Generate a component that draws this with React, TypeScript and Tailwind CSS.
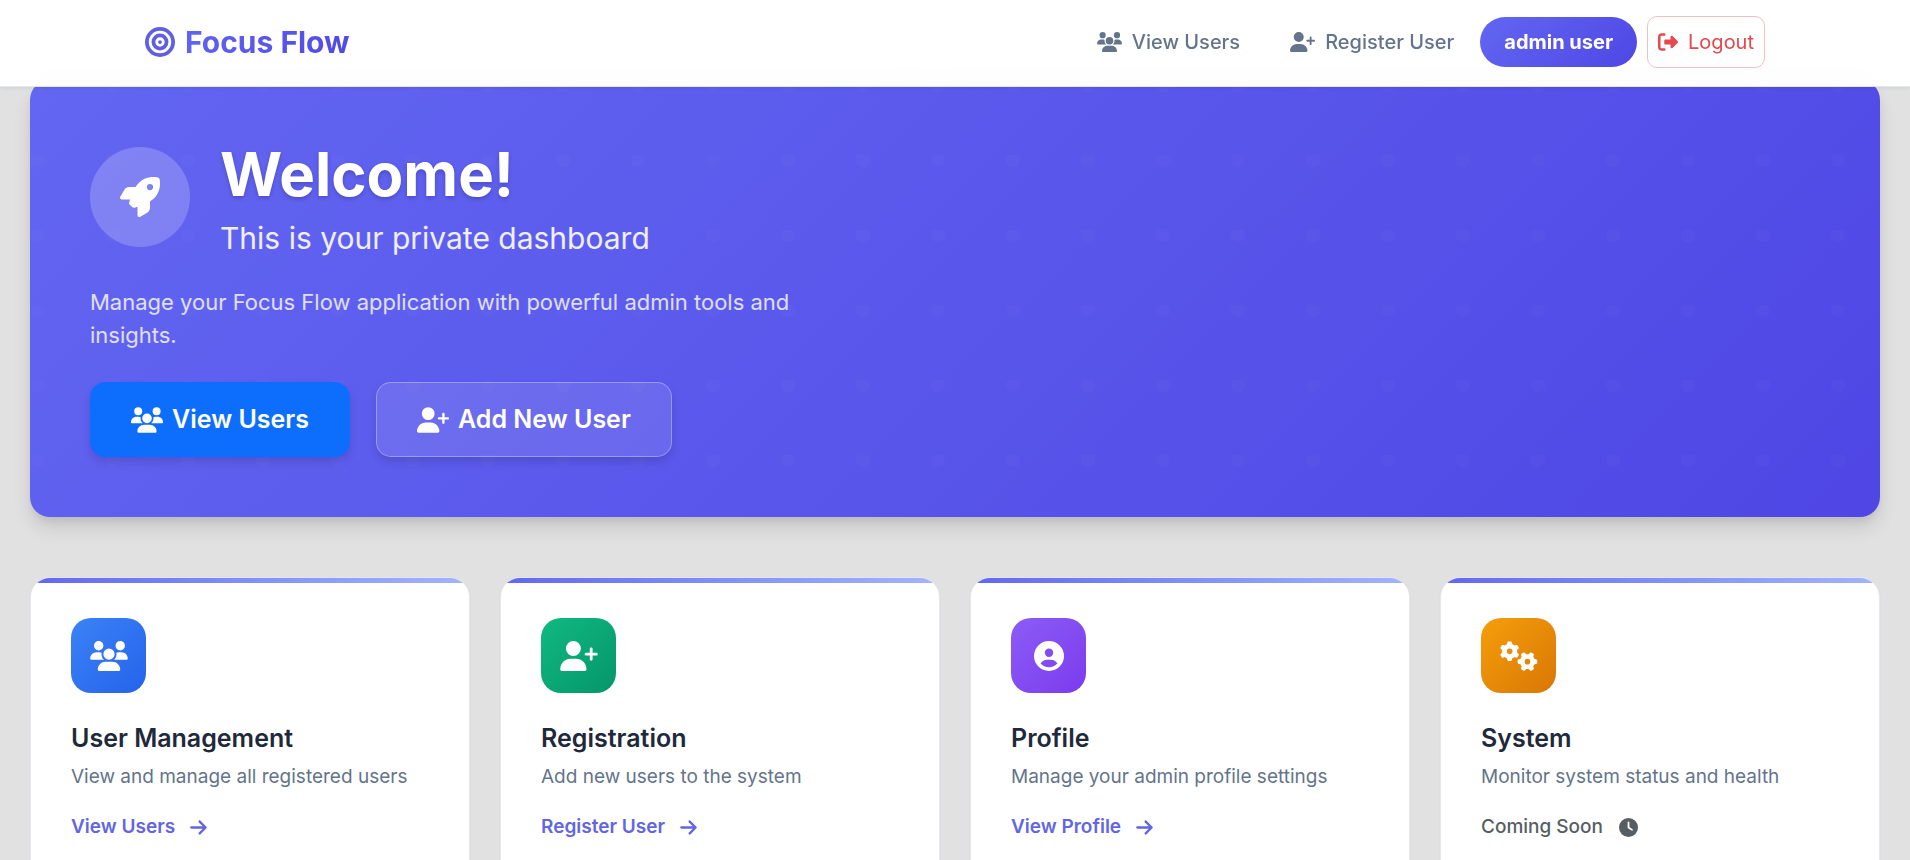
import type { ReactNode } from "react";
import {
  FaArrowRight,
  FaBullseye,
  FaCircleUser,
  FaClock,
  FaGears,
  FaRightFromBracket,
  FaRocket,
  FaUserPlus,
  FaUsers,
} from "react-icons/fa6";

type Feature = {
  title: string;
  text: string;
  action: string;
  tile: string;
  icon: ReactNode;
  available: boolean;
};

const features: Feature[] = [
  {
    title: "User Management",
    text: "View and manage all registered users",
    action: "View Users",
    tile: "from-[#3b82f6] to-[#2563eb]",
    icon: <FaUsers className="h-[30px] w-[38px]" />,
    available: true,
  },
  {
    title: "Registration",
    text: "Add new users to the system",
    action: "Register User",
    tile: "from-[#10b981] to-[#059669]",
    icon: <FaUserPlus className="h-[30px] w-[38px]" />,
    available: true,
  },
  {
    title: "Profile",
    text: "Manage your admin profile settings",
    action: "View Profile",
    tile: "from-[#8b5cf6] to-[#7c3aed]",
    icon: <FaCircleUser className="size-[30px]" />,
    available: true,
  },
  {
    title: "System",
    text: "Monitor system status and health",
    action: "Coming Soon",
    tile: "from-[#f59e0b] to-[#d97706]",
    icon: <FaGears className="h-[30px] w-[38px]" />,
    available: false,
  },
];

function Navbar() {
  return (
    <header className="sticky top-0 z-10 border-b border-[#e2e8f0] bg-white/98 shadow-[0_1px_4px_rgba(0,0,0,0.08)] backdrop-blur-[12px]">
      <nav className="mx-auto flex h-[86px] max-w-[1650px] items-center justify-between px-[15px] pb-[2px]">
        <a href="#home" className="flex items-center gap-[10px] text-[30px] leading-[44px] font-bold">
          <FaBullseye className="size-[30px] text-[#5f5fe0]" />
          <span className="bg-linear-135 from-[#6366f1] to-[#4f46e5] bg-clip-text text-transparent">Focus Flow</span>
        </a>
        <div className="flex items-center gap-[6px] text-[20px] font-medium text-[#64748b]">
          <div className="flex items-center gap-[10px]">
            <a href="#users" className="flex items-center gap-[10px] px-5">
              <FaUsers className="h-5 w-[25px]" />
              View Users
            </a>
            <a href="#register" className="flex items-center gap-[10px] px-5">
              <FaUserPlus className="h-5 w-[25px]" />
              Register User
            </a>
          </div>
          <div className="flex items-center gap-[10px]">
            <span className="rounded-full bg-linear-135 from-[#6366f1] to-[#4f46e5] px-6 py-[10px] font-bold text-white">
              admin user
            </span>
            <button
              type="button"
              className="flex h-[52px] items-center gap-[10px] rounded-[10px] border border-[#f0c0c0] bg-white px-[10px] font-normal text-[#e5484d]"
            >
              <FaRightFromBracket className="size-5" />
              Logout
            </button>
          </div>
        </div>
      </nav>
    </header>
  );
}

function Dots() {
  return (
    <svg className="pointer-events-none absolute inset-0 size-full" aria-hidden="true">
      <defs>
        <pattern id="dots" width="75" height="75" patternUnits="userSpaceOnUse">
          <circle cx="8" cy="5" r="7" fill="#fff" fillOpacity="0.015" />
        </pattern>
      </defs>
      <rect width="100%" height="100%" fill="url(#dots)" />
    </svg>
  );
}

function Hero() {
  return (
    <section className="relative overflow-hidden rounded-[20px] bg-linear-135 from-[#6366f1] to-[#4f46e5] p-[60px] text-white shadow-[0_12px_20px_-2px_rgba(0,0,0,0.12),0_5px_8px_-2px_rgba(0,0,0,0.08)]">
      <Dots />
      <div className="relative">
        <div className="flex items-center gap-[30px]">
          <div className="flex size-[100px] shrink-0 items-center justify-center rounded-full bg-white/20">
            <FaRocket className="size-10" />
          </div>
          <div>
            <h1 className="text-[60px] leading-[68px] font-bold [text-shadow:0_2px_4px_rgba(0,0,0,0.2)]">Welcome!</h1>
            <p className="mt-[14px] text-[30px] leading-8 text-white/90">This is your private dashboard</p>
          </div>
        </div>
        <p className="mt-8 max-w-[750px] text-[22px] leading-[33px] text-white/80">
          Manage your Focus Flow application with powerful admin tools and insights.
        </p>
        <div className="mt-[30px] flex gap-[26px] text-[25px] font-semibold">
          <a
            href="#users"
            className="flex h-[75px] items-center gap-[9px] rounded-[15px] border border-[#0d6efd] bg-[#0d6efd] px-10 shadow-[0_5px_8px_rgba(0,0,0,0.13)]"
          >
            <FaUsers className="h-[26px] w-8" />
            View Users
          </a>
          <a
            href="#register"
            className="flex h-[75px] items-center gap-[9px] rounded-[15px] border border-white/30 bg-white/10 px-10 shadow-[0_5px_8px_rgba(0,0,0,0.13)]"
          >
            <FaUserPlus className="h-[26px] w-8" />
            Add New User
          </a>
        </div>
      </div>
    </section>
  );
}

function FeatureCard({ feature }: { feature: Feature }) {
  return (
    <article className="relative overflow-hidden rounded-[20px] border border-[#e2e8f0] bg-white p-10 shadow-[0_1px_3px_rgba(0,0,0,0.04)]">
      <div className="absolute inset-x-0 top-0 h-[5px] bg-linear-to-r from-[#6366f1] to-[#a5b4fc]" />
      <div className={`flex size-[75px] items-center justify-center rounded-[20px] bg-linear-135 text-white ${feature.tile}`}>
        {feature.icon}
      </div>
      <h2 className="mt-[30px] text-[25px] leading-[30px] font-semibold text-[#1e293b]">{feature.title}</h2>
      <p className="mt-[9px] text-[19px] leading-[30px] text-[#64748b]">{feature.text}</p>
      {feature.available ? (
        <a href="#open" className="mt-5 flex items-center gap-[14px] text-[19px] leading-[30px] font-semibold text-[#6366e3]">
          {feature.action}
          <FaArrowRight className="size-[19px]" />
        </a>
      ) : (
        <span className="mt-5 flex items-center gap-4 text-[19px] leading-[30px] font-medium text-[#565e64]">
          {feature.action}
          <FaClock className="size-[19px]" />
        </span>
      )}
    </article>
  );
}

export default function App() {
  return (
    <div className="h-screen overflow-hidden bg-[#e1e1e1] font-['Inter',sans-serif]">
      <Navbar />
      <main className="-mt-[7px] px-[30px]">
        <Hero />
        <div className="mt-[60px] grid grid-cols-4 gap-[30px]">
          {features.map((feature) => (
            <FeatureCard key={feature.title} feature={feature} />
          ))}
        </div>
      </main>
    </div>
  );
}
